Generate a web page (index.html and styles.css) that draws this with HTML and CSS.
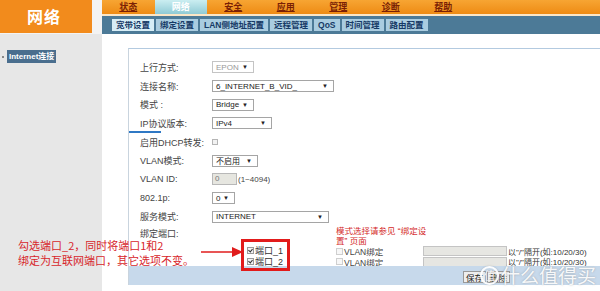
FILE: index.html
```html
<!DOCTYPE html>
<html lang="zh-CN">
<head>
  <meta charset="UTF-8" />
  <meta name="viewport" content="width=device-width, initial-scale=1.0"/>
  <title>网络 - Internet连接</title>
  <link rel="stylesheet" href="styles.css">
</head>
<body>
  <div class="page">
    <aside class="side">
      <div class="side-head"><div class="logo">网络</div></div>
      <ul class="side-menu">
        <li><span class="dot"></span><span class="side-link active">Internet连接</span></li>
      </ul>
    </aside>

    <div class="main">
      <nav class="topnav">
        <a class="tab">状态</a>
        <a class="tab active">网络</a>
        <a class="tab">安全</a>
        <a class="tab">应用</a>
        <a class="tab">管理</a>
        <a class="tab">诊断</a>
        <a class="tab">帮助</a>
      </nav>
      <nav class="subnav">
        <a class="sub active">宽带设置</a>
        <a class="sub">绑定设置</a>
        <a class="sub">LAN侧地址配置</a>
        <a class="sub">远程管理</a>
        <a class="sub">QoS</a>
        <a class="sub">时间管理</a>
        <a class="sub">路由配置</a>
      </nav>

      <section class="panel">
        <div class="form">
          <div class="row"><span class="lbl">上行方式:</span><span class="sel dis w42">EPON<i>▼</i></span></div>
          <div class="row"><span class="lbl">连接名称:</span><span class="sel w122">6_INTERNET_B_VID_<i>▼</i></span></div>
          <div class="row"><span class="lbl">模式 :</span><span class="sel w42">Bridge<i>▼</i></span></div>
          <div class="row ip"><span class="lbl">IP协议版本:</span><span class="sel w60">IPv4<i>▼</i></span></div>
          <div class="row"><span class="lbl">启用DHCP转发:</span><span class="cb dhcp"></span></div>
          <div class="row"><span class="lbl">VLAN模式:</span><span class="sel w46">不启用<i>▼</i></span></div>
          <div class="row"><span class="lbl">VLAN ID:</span><span class="txt-in">0</span><span class="range">(1~4094)</span></div>
          <div class="row"><span class="lbl">802.1p:</span><span class="sel w23">0<i>▼</i></span></div>
          <div class="row"><span class="lbl">服务模式:</span><span class="sel w117">INTERNET<i>▼</i></span></div>
        </div>

        <div class="bind">
          <div class="bind-left">
            <div class="bind-label">绑定端口:</div>
            <div class="ports">
              <div class="port"><span class="cb on"></span>端口_1</div>
              <div class="port"><span class="cb on"></span>端口_2</div>
            </div>
          </div>
          <div class="bind-right">
            <p class="hint-red">模式选择请参见 “绑定设<br>置” 页面</p>
            <div class="vlan"><span class="cb off"></span><span class="vlan-name">VLAN绑定</span><span class="txt"></span><span class="tip">以"/"隔开(如:10/20/30)</span></div>
            <div class="vlan"><span class="cb off"></span><span class="vlan-name">VLAN绑定</span><span class="txt"></span><span class="tip">以"/"隔开(如:10/20/30)</span></div>
          </div>
        </div>

        <div class="actions">
          <button class="btn">保存</button>
          <button class="btn">删除</button>
        </div>
      </section>
    </div>

    <!-- annotation drawn over the screenshot -->
    <div class="note">勾选端口_2，同时将端口1和2<br>绑定为互联网端口，其它选项不变。</div>
    <svg class="arrow" width="44" height="12" viewBox="0 0 44 12">
      <line x1="1" y1="6" x2="34" y2="6" stroke="#e01c1c" stroke-width="1.5"/>
      <polygon points="32,1 43,6 32,11" fill="#e01c1c"/>
    </svg>
    <div class="watermark"><span class="wm-circle">值</span>什么值得买</div>
  </div>
</body>
</html>
```

FILE: styles.css
```css
* {
  box-sizing: border-box;
}

body {
  margin: 0;
  background: #fff;
  font-family: "Liberation Sans", "Noto Sans CJK SC", sans-serif;
  font-size: 9px;
  color: #444;
}

.page {
  position: relative;
  display: flex;
  width: 600px;
  height: 291px;
  overflow: hidden;
}

/* left column */
.side {
  width: 102px;
  flex-shrink: 0;
  background: #e7e7e7;
}

.side-head {
  height: 34px;
  background: #f3f3f3;
}

.logo {
  width: 92px;
  height: 33px;
  padding-right: 4px;
  background: #f28b1c;
  color: #fff;
  font-family: "Noto Sans CJK SC", sans-serif;
  font-size: 16px;
  font-weight: bold;
  line-height: 33px;
  text-align: center;
  letter-spacing: 1px;
}

.side-menu {
  list-style: none;
  margin: 0;
  padding: 16px 0 0 2px;
}

.side-menu li {
  display: flex;
  align-items: center;
}

.dot {
  width: 2px;
  height: 2px;
  margin-right: 3px;
  background: #888;
}

.side-link {
  height: 13px;
  padding: 0 2px;
  line-height: 13px;
  font-size: 8px;
  font-weight: bold;
  color: #fff;
}

.side-link.active {
  background: #4a6e8e;
}

/* main column */
.main {
  flex: 1;
  display: flex;
  flex-direction: column;
}

.topnav {
  display: flex;
  height: 16px;
  background: linear-gradient(#f7a533, #ee8b14);
  border-bottom: 2px solid #fbe6c6;
}

.tab {
  width: 52.5px;
  line-height: 14px;
  text-align: center;
  font-weight: bold;
  color: #7a1f05;
  text-decoration: underline;
}

.tab.active {
  background: linear-gradient(#cbeef1, #90cbd5);
  color: #fff;
  text-decoration: none;
}

.subnav {
  display: flex;
  align-items: center;
  gap: 2px;
  height: 18px;
  padding-left: 10px;
  background: #4c7a97;
}

.sub {
  height: 12px;
  padding: 0 4px;
  line-height: 12px;
  font-size: 8.5px;
  font-weight: bold;
  color: #163a66;
  background: #a9cce0;
}

.sub.active {
  background: #d6edf6;
}

.panel {
  display: flex;
  flex-direction: column;
  height: 237px;
  margin: 14px 0 0 26px;
  border-top: 1px solid #b3cae0;
  border-left: 1px solid #c9d4de;
}

.form {
  padding: 9px 0 0 11px;
}

.row {
  position: relative;
  display: flex;
  align-items: center;
  height: 18.7px;
}

.row.ip::before {
  content: "";
  position: absolute;
  left: -11px;
  bottom: 0;
  width: 32px;
  height: 2px;
  background: #2f78c4;
}

.lbl {
  width: 72px;
  flex-shrink: 0;
}

.sel {
  display: inline-flex;
  align-items: center;
  justify-content: space-between;
  height: 12px;
  padding: 0 5px 0 3px;
  border: 1px solid #a5a5a5;
  background: #fff;
  font-size: 8px;
  color: #222;
}

.sel i {
  font-style: normal;
  font-size: 6px;
  color: #222;
}

.sel.dis {
  border-color: #c4c4c4;
  color: #999;
}

.w42 { width: 42px; }
.w122 { width: 122px; }
.w60 { width: 60px; }
.w46 { width: 46px; }
.w23 { width: 23px; }
.w117 { width: 117px; }

.cb {
  position: relative;
  display: inline-block;
  width: 7px;
  height: 7px;
  margin-right: 1px;
  border: 1px solid #9a9a9a;
  background: #f2f2f2;
  flex-shrink: 0;
}

.cb.dhcp {
  width: 6px;
  height: 6px;
  border-color: #b5b5b5;
}

.cb.off {
  border-color: #cfcfcf;
  background: #f7f7f7;
}

.cb.on::after {
  content: "";
  position: absolute;
  left: 1px;
  top: 0;
  width: 2px;
  height: 3px;
  border-right: 1px solid #333;
  border-bottom: 1px solid #333;
  transform: rotate(40deg);
}

.txt-in {
  width: 25px;
  height: 12px;
  padding-left: 2px;
  border: 1px solid #b8b8b8;
  background: #e6e6e0;
  font-size: 8px;
  line-height: 10px;
  color: #777;
}

.range {
  margin-left: 1px;
  font-size: 8px;
}

/* port binding block */
.bind {
  display: flex;
  height: 40px;
}

.bind-left {
  width: 207px;
  flex-shrink: 0;
  padding-left: 11px;
}

.bind-label {
  margin-top: 2px;
  line-height: 12px;
}

.ports {
  position: relative;
  z-index: 1;
  width: 49px;
  height: 32px;
  margin: -1px 0 0 101px;
  padding: 3px 0 0 3px;
  border: 3px solid #e21b1b;
}

.port {
  display: flex;
  align-items: center;
  height: 11px;
  color: #333;
}

.hint-red {
  margin: 0;
  font-size: 8.5px;
  line-height: 10px;
  color: #d42a2a;
}

.vlan {
  display: flex;
  align-items: center;
  height: 10.5px;
}

.vlan-name {
  width: 79px;
  font-size: 8.5px;
}

.txt {
  width: 84px;
  height: 10px;
  border: 1px solid #c4c4c4;
  background: #e6e6e2;
}

.tip {
  margin-left: 1px;
  font-size: 8px;
  color: #333;
}

.actions {
  display: flex;
  justify-content: flex-end;
  gap: 1px;
  height: 19px;
  padding: 5px 90px 0 0;
  background: #c7d9eb;
}

.btn {
  height: 12px;
  padding: 0 2px;
  border: 1px solid #999;
  border-radius: 0;
  background: #eee;
  font-family: "Noto Sans CJK SC", sans-serif;
  font-size: 8.5px;
  line-height: 10px;
  color: #222;
}

/* overlays */
.note {
  position: absolute;
  left: 18px;
  top: 238px;
  font-family: "Noto Sans CJK SC", sans-serif;
  font-size: 11px;
  line-height: 15px;
  color: #d7262b;
}

.arrow {
  position: absolute;
  left: 200px;
  top: 246px;
}

.watermark {
  position: absolute;
  left: 480px;
  top: 265px;
  display: flex;
  align-items: center;
  font-family: "Noto Sans CJK SC", sans-serif;
  font-size: 19px;
  line-height: 20px;
  color: rgba(255, 255, 255, 0.92);
  text-shadow: 0 0 2px rgba(110, 110, 110, 0.5);
}

.wm-circle {
  display: flex;
  align-items: center;
  justify-content: center;
  width: 19px;
  height: 19px;
  margin-right: 2px;
  border: 2px solid rgba(255, 255, 255, 0.92);
  border-radius: 50%;
  font-size: 11px;
  box-shadow: 0 0 2px rgba(110, 110, 110, 0.4);
}
```
